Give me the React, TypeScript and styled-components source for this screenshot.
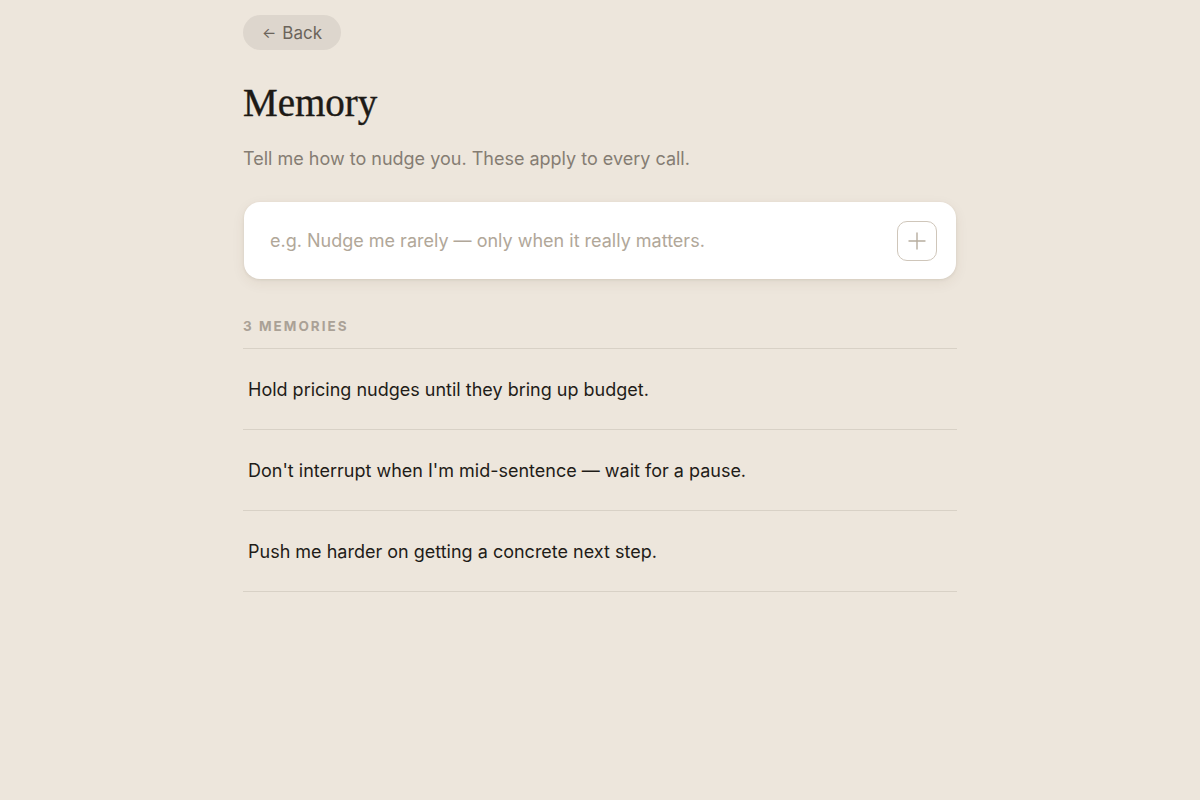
import styled, { createGlobalStyle } from "styled-components"

const GlobalStyle = createGlobalStyle`
  html, body {
    margin: 0;
    padding: 0;
    background: #ede6dc;
  }
  body {
    font-family: Inter, "Noto Sans", sans-serif;
    min-height: 800px;
  }
`

const memories = [
  "Hold pricing nudges until they bring up budget.",
  "Don't interrupt when I'm mid-sentence — wait for a pause.",
  "Push me harder on getting a concrete next step.",
]

const App = () => {
  return (
    <>
      <GlobalStyle />
      <Page>
        <Column>
          <BackButton type="button">
            <span>←</span> Back
          </BackButton>
          <Title>Memory</Title>
          <Subtitle>Tell me how to nudge you. These apply to every call.</Subtitle>

          <InputCard>
            <Input placeholder="e.g. Nudge me rarely — only when it really matters." />
            <AddButton type="button" aria-label="Add">
              <svg width="20" height="20" viewBox="0 0 20 20">
                <path d="M10 2v16M2 10h16" stroke="#b7ad9f" strokeWidth="1.4" strokeLinecap="round" />
              </svg>
            </AddButton>
          </InputCard>

          <Count>{memories.length} memories</Count>
          <List>
            {memories.map((m) => (
              <Row key={m}>{m}</Row>
            ))}
          </List>
        </Column>
      </Page>
    </>
  )
}

export default App

const Page = styled.main`
  display: flex;
  justify-content: center;
  padding: 15px 0 40px;
`

const Column = styled.div`
  width: 714px;
  display: flex;
  flex-direction: column;
  align-items: flex-start;
`

const BackButton = styled.button`
  display: flex;
  align-items: center;
  gap: 6px;
  height: 35px;
  padding: 0 19px;
  border: none;
  border-radius: 18px;
  background: #ddd6cd;
  color: #6b645b;
  font-family: Inter, "Noto Sans", sans-serif;
  font-size: 17px;
  cursor: pointer;
  span{
    font-size: 15px;
  }
`

const Title = styled.h1`
  margin: 30px 0 0;
  font-family: "Liberation Serif", "DejaVu Serif", serif;
  font-weight: 400;
  font-size: 39px;
  line-height: 46px;
  color: #1d1a16;
  -webkit-text-stroke: 0.4px #1d1a16;
`

const Subtitle = styled.p`
  margin: 21px 0 0;
  font-size: 18px;
  line-height: 24px;
  color: #857d73;
`

const InputCard = styled.div`
  margin-top: 31px;
  box-sizing: border-box;
  width: 712px;
  margin-left: 1px;
  height: 77px;
  display: flex;
  align-items: center;
  padding: 0 19px 0 24px;
  background: #fff;
  border-radius: 16px;
  box-shadow: 0 1px 3px rgba(80, 60, 30, 0.1), 0 4px 14px rgba(80, 60, 30, 0.07);
`

const Input = styled.input`
  flex: 1;
  border: none;
  outline: none;
  background: transparent;
  font-family: Inter, "Noto Sans", sans-serif;
  font-size: 18px;
  color: #1d1a16;
  &::placeholder{
    color: #b1a799;
  }
`

const AddButton = styled.button`
  width: 40px;
  height: 40px;
  display: flex;
  align-items: center;
  justify-content: center;
  padding: 0;
  background: #fff;
  border: 1.5px solid #cfc6ba;
  border-radius: 10px;
`

const Count = styled.div`
  margin-top: 39px;
  font-size: 13.5px;
  font-weight: 700;
  letter-spacing: 0.15em;
  text-transform: uppercase;
  color: #aaa196;
`

const List = styled.ul`
  list-style: none;
  margin: 14px 0 0;
  padding: 0;
  width: 100%;
  border-top: 1px solid #d8d1c6;
`

const Row = styled.li`
  height: 80px;
  display: flex;
  align-items: center;
  padding-left: 5px;
  border-bottom: 1px solid #d8d1c6;
  font-size: 18px;
  color: #1f1c18;
`
